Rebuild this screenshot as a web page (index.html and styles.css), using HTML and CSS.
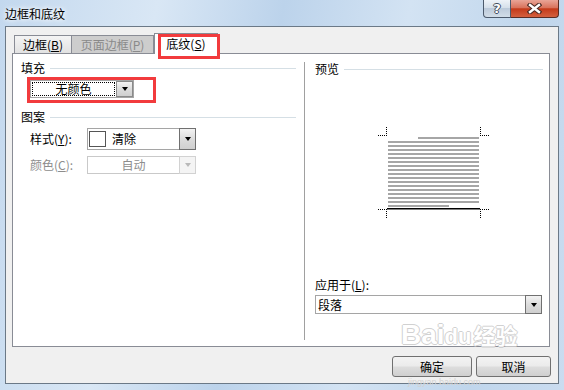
FILE: index.html
```html
<!doctype html>
<html lang="zh-CN">
<head>
    <meta charset="UTF-8">
    <title>边框和底纹</title>
    <link rel="stylesheet" href="styles.css">
</head>
<body>
<div class="window">
    <div class="titlebar">
        <span class="title">边框和底纹</span>
        <div class="caption">
            <span class="cap-help"><span class="q">?</span></span>
            <span class="cap-close">
                <svg width="15" height="11" viewBox="0 0 15 11">
                    <path d="M3 2 L12 9 M12 2 L3 9" stroke="#4a2a24" stroke-width="4.6" stroke-linecap="square" fill="none"/>
                    <path d="M3 2 L12 9 M12 2 L3 9" stroke="#fff" stroke-width="2.4" stroke-linecap="square" fill="none"/>
                </svg>
            </span>
        </div>
    </div>

    <div class="dialog">
        <!-- 选项卡 -->
        <div class="tabs">
            <span class="tab t1">边框(<u>B</u>)</span>
            <span class="tab t2 disabled">页面边框(<u>P</u>)</span>
            <span class="tab t3 active">底纹(<u>S</u>)<i class="mark mark-tab"></i></span>
        </div>

        <div class="panel">
            <div class="col-left">
                <div class="group first">填充</div>
                <div class="mark-box">
                    <div class="combo fill">
                        <span class="val"><span class="focus">无颜色</span></span>
                        <span class="drop"><i class="arrow"></i></span>
                    </div>
                </div>

                <div class="group pattern">图案</div>
                <div class="row style-row">
                    <span class="label">样式(<u>Y</u>):</span>
                    <div class="combo style">
                        <span class="val"><i class="swatch"></i>清除</span>
                        <span class="drop"><i class="arrow"></i></span>
                    </div>
                </div>
                <div class="row color-row">
                    <span class="label off">颜色(<u>C</u>):</span>
                    <div class="combo color off">
                        <span class="val center">自动</span>
                        <span class="drop"><i class="arrow"></i></span>
                    </div>
                </div>
            </div>

            <div class="col-right">
                <div class="group preview-title">预览</div>
                <svg class="preview" width="120" height="95" viewBox="0 0 120 95">
                    <g stroke="#000" stroke-width="1" stroke-dasharray="1 1" fill="none">
                        <path d="M2 9.5 H11 M10.5 1 V10"/>
                        <path d="M104.5 1 V10 M104 9.5 H113"/>
                        <path d="M2 83.5 H11 M10.5 83 V92"/>
                        <path d="M104.5 83 V92 M104 83.5 H113"/>
                    </g>
                    <g fill="#a6a6a6">
                        <rect x="42" y="11" width="61" height="2"/>
                        <rect x="12" y="15" width="91" height="2"/>
                        <rect x="12" y="19" width="91" height="2"/>
                        <rect x="12" y="23" width="91" height="2"/>
                        <rect x="12" y="27" width="91" height="2"/>
                        <rect x="12" y="31" width="91" height="2"/>
                        <rect x="12" y="35" width="91" height="2"/>
                        <rect x="12" y="39" width="91" height="2"/>
                        <rect x="12" y="43" width="91" height="2"/>
                        <rect x="12" y="47" width="91" height="2"/>
                        <rect x="12" y="51" width="91" height="2"/>
                        <rect x="12" y="55" width="91" height="2"/>
                        <rect x="12" y="59" width="91" height="2"/>
                        <rect x="12" y="63" width="91" height="2"/>
                        <rect x="12" y="67" width="91" height="2"/>
                        <rect x="12" y="71" width="91" height="2"/>
                        <rect x="12" y="75" width="91" height="2"/>
                        <rect x="12" y="79" width="61" height="2"/>
                    </g>
                    <rect x="11" y="82" width="93" height="1.5" fill="#000"/>
                </svg>
                <div class="apply-label">应用于(<u>L</u>):</div>
                <div class="combo apply">
                    <span class="val">段落</span>
                    <span class="drop"><i class="arrow"></i></span>
                </div>
            </div>
        </div>

        <div class="buttons">
            <span class="btn ok">确定</span>
            <span class="btn">取消</span>
        </div>
    </div>

    <!-- 水印 -->
    <div class="watermark">
        <span class="wm-big">Bai</span><span class="wm-paw">du</span><span class="wm-cn">经验</span>
    </div>
    <div class="wm-url">jingyan.baidu.com</div>
</div>
</body>
</html>
```

FILE: styles.css
```css
*{
    margin: 0;
    padding: 0;
    box-sizing: border-box;
}
body{
    width: 564px;
    height: 390px;
    overflow: hidden;
    font: 12px/14px "Noto Sans CJK SC", "Liberation Sans", sans-serif;
    color: #000;
}
u{
    text-decoration: underline;
    text-underline-offset: 1px;
}
.window{
    position: relative;
    width: 564px;
    height: 390px;
    display: flex;
    flex-direction: column;
    background: linear-gradient(100deg, #c3d8ee 0%, #d9e7f5 25%, #bcd3eb 45%, #d3e3f3 65%, #c0d6ec 85%, #cadcf0 100%);
}

/* 标题栏 */
.titlebar{
    height: 26px;
    padding: 0 5px;
    display: flex;
    justify-content: space-between;
    align-items: flex-start;
}
.title{
    margin-top: 7px;
    text-shadow: 0 0 4px #fff, 0 0 6px #fff;
}
.caption{
    display: flex;
}
.cap-help{
    width: 28px;
    height: 18px;
    border: 1px solid #4c5a6c;
    border-top: 0;
    border-radius: 0 0 0 4px;
    background: linear-gradient(#eef3f8, #d6e0ea 45%, #bccada 50%, #d2dde8);
    display: flex;
    align-items: center;
    justify-content: center;
}
.q{
    font: bold 13px/13px "DejaVu Sans", sans-serif;
    color: #fff;
    text-shadow: 1px 0 #3f4c5c, -1px 0 #3f4c5c, 0 1px #3f4c5c, 0 -1px #3f4c5c;
}
.cap-close{
    width: 48px;
    height: 18px;
    border: 1px solid #5a2c24;
    border-top: 0;
    border-left: 0;
    border-radius: 0 0 4px 0;
    background: linear-gradient(#e9a597, #d9735c 45%, #c43a1a 52%, #d4603f);
    display: flex;
    align-items: center;
    justify-content: center;
}

/* 对话框主体 */
.dialog{
    margin: 0 5px;
    height: 358px;
    padding-top: 6px;
    background: #f0f0f0;
    border: 1px solid #6b7987;
}
.tabs{
    position: relative;
    z-index: 1;
    height: 20px;
    margin-left: 8px;
    display: flex;
    align-items: flex-end;
}
.tab{
    height: 18px;
    line-height: 17px;
    text-align: center;
    border: 1px solid #898c95;
    border-bottom: 0;
    margin-right: -1px;
    background: linear-gradient(#f4f4f4, #e2e2e2);
    white-space: nowrap;
}
.t1{
    width: 58px;
}
.t2{
    width: 83px;
}
.tab.disabled{
    color: #8a8a8a;
    background: #cdcdcd;
}
.tab.active{
    position: relative;
    width: 64px;
    height: 21px;
    margin: 0 0 -1px 1px;
    line-height: 19px;
    background: #fff;
}
.mark{
    position: absolute;
    border: 3px solid #f23b3d;
}
.mark-tab{
    left: 3px;
    top: 0;
    width: 62px;
    height: 25px;
}

.panel{
    margin-left: 6px;
    width: 538px;
    height: 294px;
    border: 1px solid #898c95;
    background: #fff;
    display: flex;
}
.col-left{
    width: 291px;
}
.group{
    height: 14px;
    display: flex;
    align-items: center;
    white-space: nowrap;
}
.group::after{
    content: "";
    flex: 1;
    height: 1px;
    margin-left: 5px;
    background: #d5dfe5;
}
.col-left .group{
    padding-left: 8px;
    margin-right: 8px;
}
.group.first{
    margin-top: 7px;
}
.group.pattern{
    margin-top: 7px;
}
.mark-box{
    margin: 2px 0 0 14px;
    width: 129px;
    height: 26px;
    border: 3px solid #f23b3d;
}

/* 下拉框 */
.combo{
    display: flex;
    background: #fff;
    border: 1px solid #a5a5a5;
}
.combo .val{
    flex: 1;
    display: flex;
    align-items: center;
    white-space: nowrap;
}
.combo .drop{
    width: 17px;
    margin: -1px -1px -1px 0;
    border: 1px solid #707070;
    background: linear-gradient(#f3f3f3, #dcdcdc 50%, #cfcfcf);
    display: flex;
    align-items: center;
    justify-content: center;
}
.arrow{
    width: 0;
    height: 0;
    border-top: 4px solid #000;
    border-left: 3.5px solid transparent;
    border-right: 3.5px solid transparent;
}
.combo.fill{
    width: 104px;
    height: 18px;
}
.combo.fill .val{
    padding: 1px;
}
.focus{
    width: 100%;
    height: 100%;
    border: 1px dotted #000;
    display: flex;
    align-items: center;
    justify-content: center;
}
.combo.fill .drop{
    margin: 0;
    border-color: #8a8a8a;
}

.row{
    display: flex;
    align-items: center;
    padding-left: 17px;
}
.label{
    width: 57px;
    white-space: nowrap;
}
.off{
    color: #8d8d8d;
}
.style-row{
    margin-top: 4px;
}
.combo.style{
    width: 109px;
    height: 22px;
}
.swatch{
    width: 17px;
    height: 16px;
    margin: 0 6px 0 1px;
    border: 1px solid #555;
}
.color-row{
    margin-top: 6px;
}
.combo.color{
    width: 109px;
    height: 18px;
    border-color: #c9c9c9;
}
.center{
    justify-content: center;
}
.combo.color .drop{
    border-color: #d2d2d2;
    background: #f4f4f4;
}
.combo.color .arrow{
    border-top-color: #b9b9b9;
}

.col-right{
    flex: 1;
    margin: 8px 0 6px;
    padding: 0 7px 0 10px;
    border-left: 1px solid #a0a0a0;
}
.preview-title{
    margin-right: -1px;
}
.preview{
    display: block;
    margin: 50px 0 0 61px;
}
.apply-label{
    margin-top: 57px;
    height: 14px;
}
.combo.apply{
    margin-top: 3px;
    width: 227px;
    height: 19px;
}
.combo.apply .val{
    padding-left: 2px;
}

/* 按钮 */
.buttons{
    margin-top: 9px;
    padding-right: 7px;
    display: flex;
    justify-content: flex-end;
    gap: 4px;
}
.btn{
    width: 75px;
    height: 21px;
    border: 1px solid #707070;
    border-radius: 3px;
    background: linear-gradient(#f3f3f3, #ebebeb 48%, #dddddd 52%, #cfcfcf);
    display: flex;
    align-items: center;
    justify-content: center;
}
.btn.ok{
    width: 80px;
}

/* 水印 */
.watermark{
    position: absolute;
    left: 401px;
    top: 318px;
    color: #fff;
    opacity: 0.85;
    white-space: nowrap;
    pointer-events: none;
}
.wm-big, .wm-paw{
    font: bold 28px/32px "Liberation Sans", sans-serif;
    text-shadow: 1px 0 #c9c9c9, -1px 0 #c9c9c9, 0 1px #c9c9c9, 0 -1px #c9c9c9;
}
.wm-paw{
    font-size: 22px;
}
.wm-cn{
    margin-left: 2px;
    font: bold 22px/32px "Noto Sans CJK SC", sans-serif;
    text-shadow: 1px 0 #c9c9c9, -1px 0 #c9c9c9, 0 1px #c9c9c9, 0 -1px #c9c9c9;
}
.wm-url{
    position: absolute;
    left: 408px;
    top: 378px;
    font: 9px/9px "Liberation Sans", sans-serif;
    color: #d2d2d2;
    pointer-events: none;
}
```
